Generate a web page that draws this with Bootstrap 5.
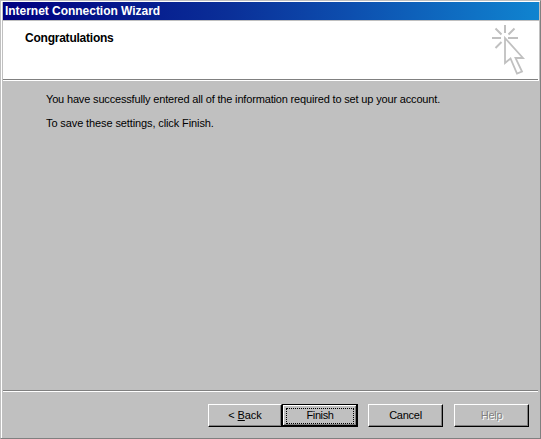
<!DOCTYPE html>
<html lang="en">
<head>
<meta charset="utf-8">
<title>Internet Connection Wizard</title>
<link rel="stylesheet" href="https://cdn.jsdelivr.net/npm/bootstrap@5.3.0/dist/css/bootstrap.min.css">
<style>
body{background:#c0c0c0;font:11px/13px "Liberation Sans",Arial,sans-serif;color:#000}
.win{width:541px;height:439px;border:1px solid;border-color:#c0c0c0 #808080 #808080 #c0c0c0;box-shadow:inset 1px 1px #fff;padding:1px 1px 0 2px}
.titlebar{height:18px;padding-left:2px;background:linear-gradient(90deg,#000080,#0a2f98 42%,#0d4faf 65%,#1084d0)}
.titlebar span,.heading{font-size:12px;line-height:13px;font-weight:700;white-space:nowrap}
.titlebar span{color:#fff;letter-spacing:-.03px}
.banner{height:60px;margin-top:1px;background:#fff;position:relative}
.banner::after{content:"";position:absolute;left:0;right:1px;bottom:1px;height:1px;background:#808080}
.heading{padding:11px 0 0 22px;letter-spacing:-.23px}
.pointer{margin:4px 12px 0 0}
.message{padding:12px 0 0 43px;white-space:nowrap}
.message p{margin:0 0 11px}
.line1{letter-spacing:-.165px}
.line2{letter-spacing:-.11px}
.actions{height:48px;margin-right:1px;border-top:1px solid #808080;box-shadow:inset 0 1px #fff;padding:13px 9px 0 0}
.btn.push{width:75px;height:23px;padding:0;border:1px solid;border-color:#fff #000 #000 #fff;border-radius:0;background:#c0c0c0;box-shadow:inset -1px -1px #808080;font-size:11px;line-height:19px;color:#000;letter-spacing:-.25px}
.btn.push:not(.primary){padding-bottom:1px}
.btn.back{width:74px;letter-spacing:-.1px}
.btn.primary{width:76px;border-color:#000;box-shadow:inset -1px -1px #000,inset 1px 1px #fff,inset -2px -2px #808080;padding:2px 3px;letter-spacing:-.4px}
.primary span{display:block;height:16px;border:1px dotted #000;line-height:13px}
.btn.dim{color:#808080;text-shadow:1px 1px #fff;margin-left:11px}
.btn.cancel{margin-left:10px}
</style>
</head>
<body class="overflow-hidden">
<main class="win d-flex flex-column">
  <header class="titlebar d-flex align-items-center"><span>Internet Connection Wizard</span></header>
  <section class="banner d-flex justify-content-between">
    <h1 class="heading m-0">Congratulations</h1>
    <svg class="pointer" width="36" height="52" viewBox="0 0 36 52" fill="none" stroke="#c0c0c0" stroke-width="2">
      <path d="M14 0v8M1 13h9M17 13h10M4.500 3.500l6 6M23.500 3.500l-6 6M4.500 23l6-6"/>
      <path stroke-width="1.8" d="M14 13v25l5.500-4.500 6.500 15 5-2-6.500-13.500h7.500z"/>
    </svg>
  </section>
  <section class="message flex-grow-1">
    <p><span class="line1">You have successfully entered all of the information required to set up your account.</span></p>
    <p><span class="line2">To save these settings, click Finish.</span></p>
  </section>
  <footer class="actions d-flex justify-content-end">
    <button class="btn push back">&lt; <u>B</u>ack</button>
    <button class="btn push primary"><span>Finish</span></button>
    <button class="btn push cancel">Cancel</button>
    <button class="btn push dim" tabindex="-1">Help</button>
  </footer>
</main>
<script src="https://cdn.jsdelivr.net/npm/bootstrap@5.3.0/dist/js/bootstrap.bundle.min.js"></script>
</body>
</html>
